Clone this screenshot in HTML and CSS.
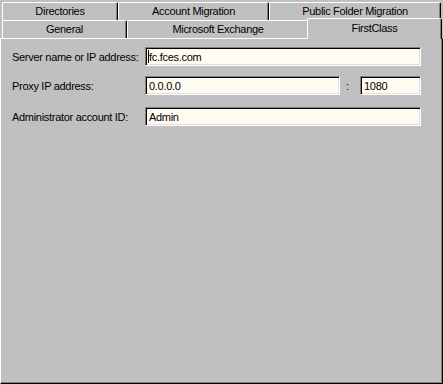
FILE: index.html
```html
<!DOCTYPE html>
<html>
<head>
<meta charset="utf-8">
<link rel="stylesheet" href="styles.css">
</head>
<body>
<div class="dialog">
  <div class="tabstrip">
    <div class="tabrow back">
      <div class="tab w-dir">Directories</div>
      <div class="tab w-acct">Account Migration</div>
      <div class="tab w-pub">Public Folder Migration</div>
    </div>
    <div class="tabrow front">
      <div class="tab w-gen">General</div>
      <div class="tab w-mx">Microsoft Exchange</div>
      <div class="tab active w-fc">FirstClass</div>
    </div>
  </div>
  <div class="panel">
    <div class="row r1">
      <div class="label">Server name or IP address:</div>
      <div class="field wide"><span class="caret"></span>fc.fces.com</div>
    </div>
    <div class="row r2">
      <div class="label">Proxy IP address:</div>
      <div class="field proxy">0.0.0.0</div>
      <div class="colon">:</div>
      <div class="field port">1080</div>
    </div>
    <div class="row r3">
      <div class="label">Administrator account ID:</div>
      <div class="field wide">Admin</div>
    </div>
  </div>
</div>
</body>
</html>
```

FILE: styles.css
```css
* { box-sizing: border-box; }
html, body {
  margin: 0;
  padding: 0;
  background: #c0c0c0;
}
body {
  width: 443px;
  height: 384px;
  overflow: hidden;
  font-family: "Liberation Sans", Arial, sans-serif;
  font-size: 11px;
  letter-spacing: -0.3px;
  color: #000;
}
.dialog {
  width: 443px;
  height: 384px;
  display: flex;
  flex-direction: column;
}
.tabstrip {
  display: flex;
  flex-direction: column;
  padding-left: 2px;
}
.tabrow {
  display: flex;
  height: 18px;
}
.tabrow.back {
  margin-top: 2px;
}
.tab {
  height: 18px;
  display: flex;
  align-items: center;
  justify-content: center;
  border-top: 1px solid #fff;
  border-left: 1px solid #fff;
  border-right: 1px solid #000;
  border-radius: 2px 2px 0 0;
  box-shadow: inset -1px 0 0 #808080;
  padding-bottom: 1px;
  white-space: nowrap;
}
.w-dir { width: 116px; }
.w-acct { width: 151px; }
.w-pub { width: 172px; }
.w-gen { width: 125px; }
.w-mx { width: 182px; }
.w-fc { width: 135px; }
.tab.active {
  position: relative;
  z-index: 1;
  margin-left: -2px;
  margin-top: -2px;
  height: 21px;
  background: #c0c0c0;
  padding-bottom: 3px;
}
.panel {
  flex: 1;
  border-top: 1px solid #fff;
  border-left: 1px solid #fff;
  border-right: 1px solid #000;
  border-bottom: 1px solid #000;
  box-shadow: inset -1px -1px 0 #808080;
  padding: 8px 0 0 11px;
  display: flex;
  flex-direction: column;
}
.row {
  display: flex;
  align-items: center;
  height: 19px;
}
.r2 { margin-top: 10px; }
.r3 { margin-top: 12px; }
.label {
  width: 133px;
}
.field {
  height: 19px;
  background: #fffbf0;
  border-top: 1px solid #808080;
  border-left: 1px solid #808080;
  border-right: 1px solid #fff;
  border-bottom: 1px solid #fff;
  box-shadow: inset 1px 1px 0 #000, inset -1px -1px 0 #dfdfdf;
  padding: 0 3px;
  display: flex;
  align-items: center;
}
.wide { width: 276px; }
.proxy { width: 195px; }
.port { width: 61px; }
.colon {
  width: 20px;
  text-align: center;
  padding-right: 5px;
}
.caret {
  display: inline-block;
  width: 1px;
  height: 13px;
  background: #000;
  margin-left: -1px;
}
```
